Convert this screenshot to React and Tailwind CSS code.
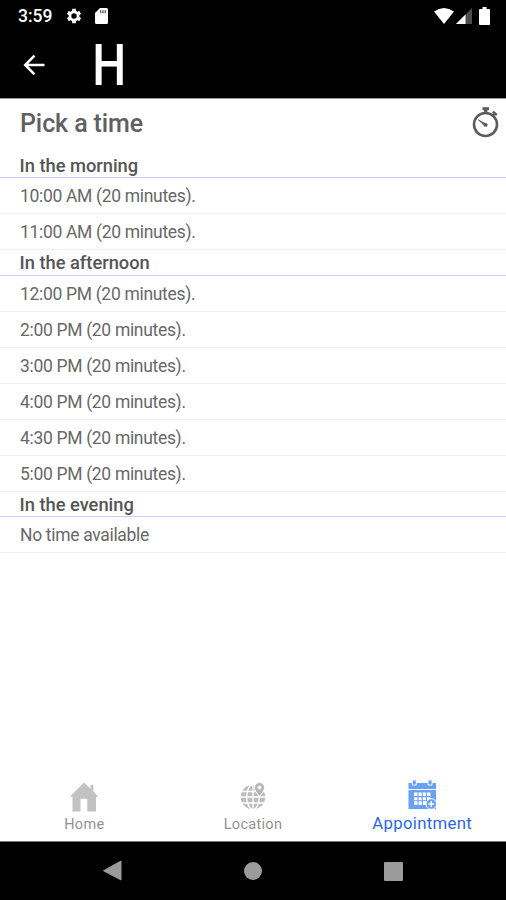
import React from 'react';

const sections = [
  { title: 'In the morning', slots: ['10:00 AM (20 minutes).', '11:00 AM (20 minutes).'] },
  {
    title: 'In the afternoon',
    slots: [
      '12:00 PM (20 minutes).',
      '2:00 PM (20 minutes).',
      '3:00 PM (20 minutes).',
      '4:00 PM (20 minutes).',
      '4:30 PM (20 minutes).',
      '5:00 PM (20 minutes).',
    ],
  },
  { title: 'In the evening', slots: ['No time available'] },
];

const StatusBar = () => (
  <div className="flex h-8 items-center justify-between pl-[18px] pr-[16px]">
    <div className="flex items-center">
      <span className="w-[47px] text-[17.5px] leading-8 font-medium whitespace-nowrap">3:59</span>
      <svg className="h-[18px] w-[18px]" viewBox="0 0 24 24" fill="currentColor">
        <path d="M19.14 12.94c.04-.3.06-.61.06-.94s-.02-.64-.07-.94l2.03-1.58a.49.49 0 0 0 .12-.61l-1.92-3.32a.49.49 0 0 0-.59-.22l-2.39.96a7 7 0 0 0-1.62-.94l-.36-2.54a.48.48 0 0 0-.48-.41h-3.84a.48.48 0 0 0-.47.41l-.36 2.54c-.59.24-1.13.57-1.62.94l-2.39-.96a.48.48 0 0 0-.59.22L2.74 8.87a.48.48 0 0 0 .12.61l2.03 1.58a6 6 0 0 0 0 1.88l-2.03 1.58a.49.49 0 0 0-.12.61l1.92 3.32c.12.22.37.29.59.22l2.39-.96c.5.38 1.03.7 1.62.94l.36 2.54c.05.24.24.41.48.41h3.84c.24 0 .44-.17.47-.41l.36-2.54c.59-.24 1.13-.56 1.62-.94l2.39.96c.22.08.47 0 .59-.22l1.92-3.32a.48.48 0 0 0-.12-.61zM12 15.6a3.6 3.6 0 1 1 0-7.2 3.6 3.6 0 0 1 0 7.2z" />
      </svg>
      <svg className="ml-3 h-4 w-[13px]" viewBox="0 0 13 16">
        <path d="M5 0h6.5Q13 0 13 1.500V14.500Q13 16 11.500 16H1.500Q0 16 0 14.500V5z" fill="#fff" />
        <path d="M5 2.300h1.300v3H5zM7.300 2.300h1.300v3H7.300zM9.600 2.300h1.300v3H9.600z" fill="#555" />
      </svg>
    </div>
    <div className="flex items-center">
      <svg className="h-4 w-5" viewBox="0 0 20 16" fill="#fff">
        <path d="M0 3.500Q10-3.500 20 3.500L10 16z" />
      </svg>
      <svg className="ml-[2px] h-4 w-4" viewBox="0 0 16 16">
        <path d="M16 0v16H0z" fill="#4d4d4d" />
        <path d="M9.500 6.500V16H0z" fill="#fff" />
      </svg>
      <svg className="ml-[7px] h-[18px] w-[11px]" viewBox="0 0 11 18" fill="#fff">
        <path d="M3.500 0h4v2H10q1 0 1 1v14q0 1-1 1H1q-1 0-1-1V3q0-1 1-1h2.500z" />
      </svg>
    </div>
  </div>
);

const AppBar = () => (
  <div className="flex h-[66px] items-center pl-[23px]">
    <svg className="h-[22px] w-[22px]" viewBox="0 0 22 22" fill="none" stroke="#fff" strokeWidth="2.500">
      <path d="M21.500 11H2.500M11.500 1.700L2.200 11l9.300 9.300" />
    </svg>
    <span className="ml-[44px] inline-block scale-x-[0.84] pt-px text-[57px] leading-[66px] font-medium">H</span>
  </div>
);

const StopwatchIcon = () => (
  <svg className="h-[31px] w-[27px]" viewBox="0 0 27 31" fill="none" stroke="#5c5c5c">
    <circle cx="13.500" cy="17.500" r="11.500" strokeWidth="2.600" />
    <path d="M10.500 1.700h6.500" strokeWidth="3" />
    <path d="M13.700 3v4" strokeWidth="3.200" />
    <path d="M21 8.800l2.300-2.600" strokeWidth="2" />
    <path d="M20.800 4.800l4 3.200" strokeWidth="2.400" />
    <path d="M6.500 13l7.300 3.800-1 2.200z" fill="#5c5c5c" strokeWidth="0.800" />
    <circle cx="13.700" cy="17.900" r="1.700" fill="#5c5c5c" strokeWidth="0.500" />
  </svg>
);

const HomeIcon = () => (
  <svg className="h-[30px] w-[30px]" viewBox="0 0 30 30" fill="#c2c2c2">
    <path d="M15 .5L.8 14.800h2.700V29.500h8V16.800h6.800v12.700H27V14.800h2.500L24.300 9.500V3h-2.800v3.700z" />
  </svg>
);

const LocationIcon = () => (
  <svg className="h-7 w-[26px]" viewBox="0 0 26 28" fill="none">
    <circle cx="13" cy="15" r="12.300" fill="#bdbdbd" />
    <g stroke="#fff" strokeWidth="1.300">
      <path d="M13 2v26M0 15h26M1 9.500h24M1 21h24" />
      <ellipse cx="13" cy="15" rx="6.300" ry="12.500" />
    </g>
    <path d="M19.500 14.500c-3.500-4.500-5-6.500-5-9a5 5 0 0 1 10 0c0 2.500-1.500 4.500-5 9z" fill="#b3b3b3" stroke="#fff" strokeWidth="1" />
    <circle cx="19.500" cy="5.500" r="2" fill="#fff" />
  </svg>
);

const CalendarIcon = () => (
  <svg className="h-[30px] w-[30px]" viewBox="0 0 30 30">
    <path d="M1.500 3h27.500v6H1.500zM1.500 10h27.500V29H1.500z" fill="#68a1f5" />
    <path d="M5.300 0h4v5h-4zM21 0h4v5h-4z" fill="#68a1f5" stroke="#fff" strokeWidth="0.900" />
    <path d="M7 12.500h16.500v12.500H7z" fill="#fff" />
    <path d="M7 16.600h16.500M7 20.800h16.500M11 12.500v12.500M15.200 12.500v12.500M19.400 12.500v12.500" stroke="#68a1f5" strokeWidth="1.100" />
    <circle cx="24.300" cy="24" r="5.300" fill="#68a1f5" stroke="#fff" strokeWidth="1" />
    <path d="M24.300 21v6M21.300 24h6" stroke="#fff" strokeWidth="1.400" />
  </svg>
);

const TabBar = () => (
  <nav className="grid h-[62px] grid-cols-3 text-[#929292]">
    <div className="flex flex-col items-center pt-[3px]">
      <HomeIcon />
      <span className="mt-[5px] text-[14.500px] leading-4 tracking-[0.3px]">Home</span>
    </div>
    <div className="flex flex-col items-center pt-[3px]">
      <LocationIcon />
      <span className="mt-[7px] text-[14.500px] leading-4 tracking-[0.3px]">Location</span>
    </div>
    <div className="flex flex-col items-center pl-px pt-px text-[#2d68df]">
      <CalendarIcon />
      <span className="mt-1 text-[16.800px] leading-[18px] tracking-[0.3px]">Appointment</span>
    </div>
  </nav>
);

const SystemNav = () => (
  <div className="flex h-[59px] items-center justify-between border-t border-[#777] bg-black pr-[103px] pl-[102px]">
    <svg className="h-[22px] w-5" viewBox="0 0 20 22" fill="#9b9b9b">
      <path d="M1.500 10.200L18.500.8q1-.5 1 .6v18.200q0 1.100-1 .6L1.500 11.200q-1-.5 0-1z" />
    </svg>
    <div className="h-[18px] w-[18px] rounded-full bg-[#9b9b9b]" />
    <div className="h-[19px] w-[19px] rounded-[1px] bg-[#9b9b9b]" />
  </div>
);

export default function App() {
  return (
    <div className="flex h-[900px] w-[506px] flex-col overflow-hidden bg-white font-['Roboto',sans-serif] text-[#606060]">
      <header className="h-[99px] shrink-0 border-b border-[#999] bg-black text-white">
        <StatusBar />
        <AppBar />
      </header>
      <main className="flex-1">
        <div className="flex h-[53.500px] items-start justify-between pt-2 pr-[7px] pl-5">
          <h1 className="pt-px text-[25px] leading-8 font-medium tracking-[-0.1px]">Pick a time</h1>
          <StopwatchIcon />
        </div>
        {sections.map((section) => (
          <section key={section.title}>
            <h2 className="h-[25.500px] border-b border-[#c8cbff] pl-[19.500px] text-[18.300px] leading-[26px] font-medium text-[#555]">
              {section.title}
            </h2>
            <ul>
              {section.slots.map((slot) => (
                <li key={slot} className="h-9 border-b border-[#f0f0f0] pl-5 text-[17.500px] leading-[37.500px] tracking-[-0.320px] text-[#686868]">
                  {slot}
                </li>
              ))}
            </ul>
          </section>
        ))}
      </main>
      <TabBar />
      <SystemNav />
    </div>
  );
}
